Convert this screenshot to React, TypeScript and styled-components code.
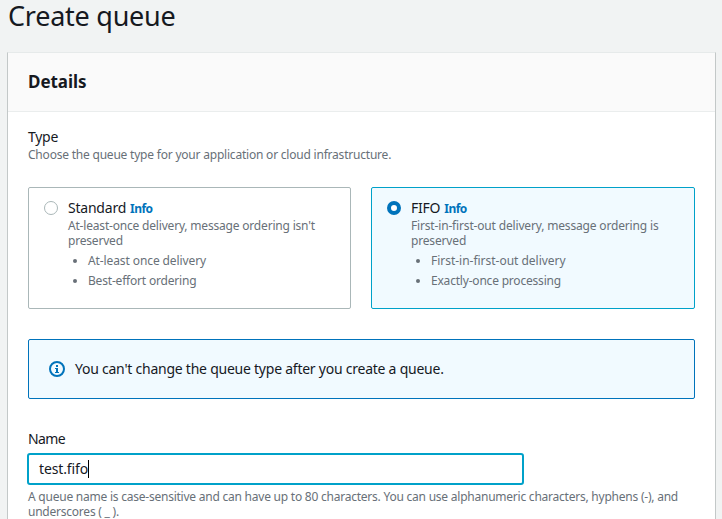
import React from "react";
import styled, { createGlobalStyle } from "styled-components";

const GlobalStyle = createGlobalStyle`
  * { box-sizing: border-box; }
  body {
    margin: 0;
    background: #f1f3f3;
    color: #16191f;
    font: 400 14px/20px "Noto Sans", "Open Sans", sans-serif;
    overflow: hidden;
  }
`;

const Page = styled.main`
  width: 722px;
  height: 519px;
  padding: 0 6px 0 7px;
  overflow: hidden;
`;

const PageTitle = styled.h1`
  margin: 0;
  padding-left: 1px;
  height: 52px;
  font-size: 27px;
  font-weight: 400;
  line-height: 32px;
  letter-spacing: -0.25px;
`;

const Panel = styled.section`
  height: 520px;
  background: #fff;
  border: 1px solid #c3c8c8;
  border-top-color: #e6eaea;
`;

const PanelHeader = styled.header`
  display: flex;
  align-items: center;
  height: 59px;
  padding: 0 20px;
  background: #fafafa;
  border-bottom: 1px solid #eaeded;
`;

const PanelTitle = styled.h2`
  margin: 0;
  font-size: 17px;
  line-height: 24px;
  font-weight: 700;
  letter-spacing: -0.06px;
`;

const PanelBody = styled.div`
  padding: 15px 20px 0;
`;

const Label = styled.div<{ $spacing?: number }>`
  letter-spacing: ${(p) => p.$spacing ?? -0.28}px;
`;

const Hint = styled.p<{ $spacing?: number }>`
  margin: 0;
  color: #687078;
  font-size: 12px;
  line-height: 15px;
  letter-spacing: ${(p) => p.$spacing ?? -0.2}px;
`;

const Tiles = styled.div`
  display: grid;
  grid-template-columns: 323px 324px;
  gap: 20px;
  margin-top: 25px;
`;

const Tile = styled.label<{ $selected?: boolean }>`
  display: grid;
  grid-template-columns: 14px 1fr;
  column-gap: 10px;
  align-content: start;
  height: 122px;
  padding: 10px 15px;
  border: 1px solid ${(p) => (p.$selected ? "#00a1c9" : "#aab7b8")};
  border-radius: 2px;
  background: ${(p) => (p.$selected ? "#f1faff" : "#fff")};
`;

const Radio = styled.span<{ $selected?: boolean }>`
  width: 14px;
  height: 14px;
  margin-top: 3px;
  border: ${(p) => (p.$selected ? "4px solid #0073bb" : "1px solid #aab7b8")};
  border-radius: 50%;
  background: #fff;
`;

const TileTitle = styled.div`
  display: flex;
  align-items: baseline;
  gap: 4px;
  line-height: 19px;
  letter-spacing: -0.22px;
`;

const InfoLink = styled.a`
  color: #0073bb;
  font-size: 12px;
  font-weight: 700;
  letter-spacing: -0.55px;
`;

const Bullets = styled.ul`
  margin: 3px 0 0;
  padding-left: 20px;
  color: #687078;
  font-size: 12px;
  line-height: 20px;
`;

const Bullet = styled.li<{ $spacing: number }>`
  letter-spacing: ${(p) => p.$spacing}px;
`;

const Notice = styled.div`
  display: flex;
  align-items: center;
  gap: 10px;
  height: 60px;
  margin-top: 30px;
  padding: 0 20px;
  border: 1px solid #0073bb;
  border-radius: 2px;
  background: #f1faff;
  letter-spacing: -0.24px;
`;

const NoticeIcon = styled.svg`
  width: 16px;
  height: 16px;
  flex: none;
`;

const NameField = styled.div`
  margin-top: 30px;
`;

const TextBox = styled.div`
  display: flex;
  align-items: center;
  width: 497px;
  height: 32px;
  margin: 4px 0 4px -1px;
  padding: 0 10px;
  border: 2px solid #00a1c9;
  border-radius: 3px;
  letter-spacing: -0.13px;
`;

const Caret = styled.span`
  width: 1px;
  height: 18px;
  background: #000;
`;

type Choice = { title: string; text: string; spacing: number; bullets: [string, number][]; selected?: boolean };

const choices: Choice[] = [
  {
    title: "Standard",
    text: "At-least-once delivery, message ordering isn't preserved",
    spacing: -0.19,
    bullets: [["At-least once delivery", -0.1], ["Best-effort ordering", -0.19]],
  },
  {
    title: "FIFO",
    text: "First-in-first-out delivery, message ordering is preserved",
    spacing: -0.165,
    bullets: [["First-in-first-out delivery", -0.02], ["Exactly-once processing", -0.2]],
    selected: true,
  },
];

export default function App() {
  return (
    <>
      <GlobalStyle />
      <Page>
        <PageTitle>Create queue</PageTitle>
        <Panel>
          <PanelHeader>
            <PanelTitle>Details</PanelTitle>
          </PanelHeader>
          <PanelBody>
            <Label>Type</Label>
            <Hint $spacing={-0.21}>Choose the queue type for your application or cloud infrastructure.</Hint>
            <Tiles>
              {choices.map((c) => (
                <Tile key={c.title} $selected={c.selected}>
                  <Radio $selected={c.selected} />
                  <div>
                    <TileTitle>
                      {c.title}
                      <InfoLink>Info</InfoLink>
                    </TileTitle>
                    <Hint $spacing={c.spacing}>{c.text}</Hint>
                    <Bullets>
                      {c.bullets.map(([text, spacing]) => (
                        <Bullet key={text} $spacing={spacing}>{text}</Bullet>
                      ))}
                    </Bullets>
                  </div>
                </Tile>
              ))}
            </Tiles>
            <Notice>
              <NoticeIcon viewBox="0 0 16 16" fill="none" stroke="#0073bb" strokeWidth="2">
                <circle cx="8" cy="8" r="7" />
                <path d="M8 4v2M8 7v4" />
                <path d="M6 7.5h2M6 11.5h4" strokeWidth="1" />
              </NoticeIcon>
              You can't change the queue type after you create a queue.
            </Notice>
            <NameField>
              <Label $spacing={-0.6}>Name</Label>
              <TextBox>
                test.fifo
                <Caret />
              </TextBox>
              <Hint $spacing={-0.231}>
                A queue name is case-sensitive and can have up to 80 characters. You can use alphanumeric characters, hyphens (-), and underscores ( _ ).
              </Hint>
            </NameField>
          </PanelBody>
        </Panel>
      </Page>
    </>
  );
}
